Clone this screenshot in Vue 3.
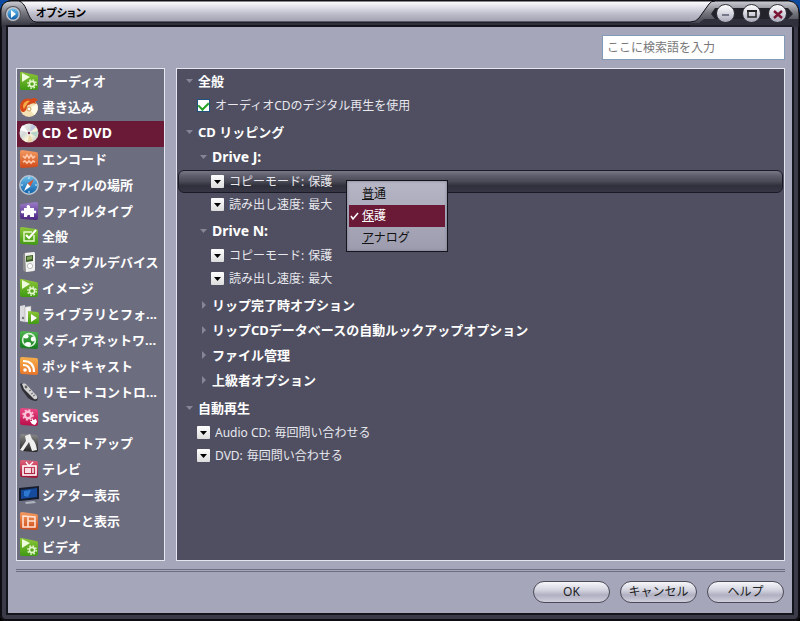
<template>
  <div class="window">
    <!-- Shared icon shapes -->
    <svg class="sprite" width="0" height="0" aria-hidden="true">
      <defs>
        <linearGradient id="gGreen" x1="0" y1="0" x2="0" y2="1">
          <stop offset="0" stop-color="#8fc63a" /><stop offset="1" stop-color="#3f9a12" />
        </linearGradient>
        <linearGradient id="gOrange" x1="0" y1="0" x2="0" y2="1">
          <stop offset="0" stop-color="#f39a62" /><stop offset="1" stop-color="#cf4a18" />
        </linearGradient>
        <linearGradient id="gFeed" x1="0" y1="0" x2="0" y2="1">
          <stop offset="0" stop-color="#f6b04c" /><stop offset="1" stop-color="#e8742a" />
        </linearGradient>
        <linearGradient id="gPurple" x1="0" y1="0" x2="0" y2="1">
          <stop offset="0" stop-color="#9b7cc8" /><stop offset="1" stop-color="#4a2580" />
        </linearGradient>
        <linearGradient id="gRed" x1="0" y1="0" x2="0" y2="1">
          <stop offset="0" stop-color="#e0607a" /><stop offset="1" stop-color="#9c1230" />
        </linearGradient>
        <linearGradient id="gPink" x1="0" y1="0" x2="0" y2="1">
          <stop offset="0" stop-color="#ea4a86" /><stop offset="1" stop-color="#b80c48" />
        </linearGradient>
        <linearGradient id="gDark" x1="0" y1="0" x2="0" y2="1">
          <stop offset="0" stop-color="#8a8a8a" /><stop offset="1" stop-color="#222" />
        </linearGradient>
        <linearGradient id="gNet" x1="0" y1="0" x2="0" y2="1">
          <stop offset="0" stop-color="#4eb450" /><stop offset="1" stop-color="#147a1c" />
        </linearGradient>
        <linearGradient id="gSky" x1="0" y1="0" x2="0" y2="1">
          <stop offset="0" stop-color="#6cc0ec" /><stop offset="1" stop-color="#0c5ea8" />
        </linearGradient>
        <linearGradient id="gDisc" x1="0" y1="0" x2="1" y2="1">
          <stop offset="0" stop-color="#fff" /><stop offset="0.4" stop-color="#d2d8d6" />
          <stop offset="0.6" stop-color="#faf6da" /><stop offset="1" stop-color="#b9bcc4" />
        </linearGradient>
      </defs>
      <symbol id="media" viewBox="0 0 20 20">
        <path d="M1 2 Q1 0 3 1 L17 4 Q19 4 19 6 V17 Q19 19 17 19 H3 Q1 19 1 17Z" fill="url(#gGreen)" />
        <path d="M3 2 L11 6 L3 11Z" fill="#eefbdc" />
        <circle cx="13" cy="13" r="2.6" fill="none" stroke="#e4f6cc" stroke-width="1.6" />
        <circle cx="13" cy="13" r="4.2" fill="none" stroke="#e4f6cc" stroke-width="1.4" stroke-dasharray="1.7 1.6" />
      </symbol>
      <symbol id="burn" viewBox="0 0 20 20">
        <circle cx="10" cy="11" r="9" fill="#f3e3b4" />
        <path d="M10 11 L18 7 A9 9 0 0 1 15 18Z" fill="#fffbe8" />
        <path d="M1 10 C1 3 7 0 12 2 C15 0 18 1 19 4 C16 3 16 5 17 7 C13 5 12 8 9 8 C7 10 9 12 5 15 C2 15 1 13 1 10Z" fill="#d6481a" />
        <path d="M4 10 C4 5 8 3 11 4 C8 6 8 8 5 12Z" fill="#f6ac46" />
        <circle cx="10" cy="12" r="2" fill="#fff" stroke="#c99a58" />
      </symbol>
      <symbol id="disc" viewBox="0 0 20 20">
        <circle cx="10" cy="10" r="9.5" fill="url(#gDisc)" />
        <path d="M10 10 L1 7 A9.5 9.5 0 0 1 4 2Z" fill="#fff" />
        <path d="M10 10 L9 19 A9 9 0 0 0 14 18Z" fill="#e9d5a8" />
        <path d="M10 10 L19 8 L18 14Z" fill="#b7d4c6" />
        <path d="M10 10 L13 1 L17 4Z" fill="#bdc4e0" />
        <circle cx="10" cy="10" r="2.4" fill="#eee" />
        <circle cx="10" cy="10" r="1.2" fill="#6b1a35" />
      </symbol>
      <symbol id="encode" viewBox="0 0 20 20">
        <path d="M1 3 Q1 1 3 1 L17 3 Q19 3 19 5 V16 Q19 18 17 18 L3 19 Q1 19 1 17Z" fill="url(#gOrange)" />
        <path d="M4 7 L6 9 L8 6 L10 9 L12 6 L14 9 L16 7 M4 13 L6 12 L8 14 L10 12 L12 14 L14 12 L16 13" fill="none" stroke="#ffc9ac" stroke-width="1.6" />
      </symbol>
      <symbol id="compass" viewBox="0 0 20 20">
        <circle cx="10" cy="10" r="9.2" fill="url(#gSky)" stroke="#b8c4d0" stroke-width="1.4" />
        <path d="M15 4 L11.5 11.5 L8.5 8.5Z" fill="#d65a3a" />
        <path d="M5 16 L8.5 8.5 L11.5 11.5Z" fill="#fff" />
        <path d="M10 2 V4 M10 16 V18 M2 10 H4 M16 10 H18" stroke="#d8f0ff" />
      </symbol>
      <symbol id="puzzle" viewBox="0 0 20 20">
        <path d="M1 5 Q1 3 3 3 L17 1 Q19 1 19 3 V17 Q19 19 17 19 L3 18 Q1 18 1 16Z" fill="url(#gPurple)" />
        <path d="M5 7 H8 C6 3 12 3 11 7 H15 V10 C18 8 18 14 15 12 V16 H11 C12 13 8 13 8 16 H5 V12 C1 14 1 8 5 10Z" fill="#fff" />
      </symbol>
      <symbol id="check" viewBox="0 0 20 20">
        <path d="M1 3 Q1 1 3 1 L17 3 Q19 3 19 5 V17 Q19 19 17 19 L3 18 Q1 18 1 16Z" fill="url(#gGreen)" />
        <path d="M15 9 V15 H5 V6 H13" fill="none" stroke="#e8fad0" stroke-width="1.4" />
        <path d="M7 9 L10 12 L17 4" fill="none" stroke="#fff" stroke-width="2" />
      </symbol>
      <symbol id="player" viewBox="0 0 20 20">
        <path d="M5 1 L15 0 Q16 0 16 2 V18 Q16 19 15 19 L6 20 L4 18 V3Z" fill="#8d8d8d" />
        <path d="M6 1 L15 0 Q16 0 16 2 V17 Q16 19 15 19 L7 20Z" fill="#f0f0ee" />
        <path d="M7 4 L14 3 V9 L7 10Z" fill="#3c5a2a" />
        <path d="M8 5 L13 4 V7 L8 8Z" fill="#7fa458" />
        <circle cx="11" cy="14" r="2.6" fill="#fff" stroke="#bbb" />
      </symbol>
      <symbol id="library" viewBox="0 0 20 20">
        <path d="M1 2 L6 1 V18 L1 17Z" fill="#dcdce0" />
        <path d="M6 3 L12 2 V18 H6Z" fill="#f2f2f4" stroke="#999" stroke-width="0.5" />
        <circle cx="4" cy="14" r="1.2" fill="#777" />
        <path d="M9 7 L18 8 Q20 8 20 10 V18 Q20 20 18 20 H9Z" fill="url(#gGreen)" />
        <path d="M12 10 L18 14 L12 18Z" fill="#fff" />
      </symbol>
      <symbol id="network" viewBox="0 0 20 20">
        <path d="M1 3 Q1 1 3 1 L17 2 Q19 2 19 4 V17 Q19 19 17 19 L3 18 Q1 18 1 16Z" fill="url(#gNet)" />
        <circle cx="10" cy="10" r="6.4" fill="none" stroke="#d8f4d8" stroke-width="1.6" />
        <ellipse cx="7" cy="6.5" rx="2.6" ry="2" fill="#fff" />
        <ellipse cx="14" cy="9" rx="2.2" ry="2.6" fill="#fff" />
        <ellipse cx="9" cy="14" rx="3" ry="2" fill="#fff" />
      </symbol>
      <symbol id="feed" viewBox="0 0 20 20">
        <path d="M1 3 Q1 1 3 1 L17 2 Q19 2 19 4 V17 Q19 19 17 19 L3 18 Q1 18 1 16Z" fill="url(#gFeed)" />
        <circle cx="6" cy="14" r="1.8" fill="#fff" />
        <path d="M4 9 Q11 9 11 16 M4 5 Q15 5 15 16" fill="none" stroke="#fff" stroke-width="2.2" />
      </symbol>
      <symbol id="remote" viewBox="0 0 20 20">
        <path d="M1 2 Q4 0 8 3 L18 14 Q20 19 16 19 Q13 19 9 16 L3 8Z" fill="#2f2f35" />
        <path d="M3 2 Q6 0 9 4 L18 14 Q19 18 15 17 L5 7Z" fill="#d2d2d4" />
        <circle cx="7" cy="5" r="1.4" fill="#666" />
        <path d="M10 9 L12 8 M12 12 L14 11 M14 14 L16 13" stroke="#666" />
      </symbol>
      <symbol id="services" viewBox="0 0 20 20">
        <path d="M1 3 Q1 1 3 1 L17 2 Q19 2 19 4 V17 Q19 19 17 19 L3 18 Q1 18 1 16Z" fill="url(#gPink)" />
        <circle cx="9" cy="8" r="3.2" fill="none" stroke="#ffc4da" stroke-width="2.4" />
        <circle cx="9" cy="8" r="5" fill="none" stroke="#ffc4da" stroke-width="1.6" stroke-dasharray="2 1.9" />
        <path d="M13 10 L14 13 L17 12 L18 15 L16 18 L13 17 L11 14 H13Z" fill="#fff" />
      </symbol>
      <symbol id="startup" viewBox="0 0 20 20">
        <path d="M1 3 Q1 1 3 1 L17 2 Q19 2 19 4 V17 Q19 19 17 19 L3 18 Q1 18 1 16Z" fill="url(#gDark)" />
        <path d="M6 3 L11 1 L13 6 Q17 9 18 17 L13 18 L10 9 L4 18 L1 17 L7 8Z" fill="#f0f0f0" />
      </symbol>
      <symbol id="tv" viewBox="0 0 20 20">
        <path d="M1 3 Q1 1 3 1 L17 2 Q19 2 19 4 V17 Q19 19 17 19 L3 18 Q1 18 1 16Z" fill="url(#gRed)" />
        <rect x="4" y="7" width="13" height="9" fill="none" stroke="#fff" stroke-width="1.6" />
        <rect x="6" y="9" width="6" height="5" fill="#fbdbe0" />
        <path d="M7 3 L10 7 L14 3 M14 9 V14" fill="none" stroke="#fff" stroke-width="1.4" />
      </symbol>
      <symbol id="theater" viewBox="0 0 20 20">
        <path d="M0 3 L20 1 V14 L0 16Z" fill="#161c2c" />
        <path d="M2 5 L18 3 V12 L2 14Z" fill="#154a9c" />
        <path d="M5 6 L12 5 L9 12 L5 11Z" fill="#2f78d2" />
        <path d="M6 17 L15 16 L17 18 L7 19Z" fill="#aeb4bc" />
      </symbol>
      <symbol id="layout" viewBox="0 0 20 20">
        <path d="M1 3 Q1 1 3 1 L17 3 Q19 3 19 5 V17 Q19 19 17 19 L3 18 Q1 18 1 16Z" fill="url(#gOrange)" />
        <path d="M4 5 L16 6 V16 H4Z M9 5 V16 M9 10 H16" fill="none" stroke="#ffe4d4" stroke-width="1.6" />
      </symbol>
    </svg>

    <header class="titlebar">
      <svg class="cap-left" viewBox="0 0 36 27" width="36" height="27" aria-hidden="true">
        <defs>
          <linearGradient id="frame" x1="0" y1="0" x2="0" y2="1">
            <stop offset="0" stop-color="#cfcfd6" /><stop offset="0.45" stop-color="#77777f" />
            <stop offset="1" stop-color="#30303c" />
          </linearGradient>
          <linearGradient id="silver" gradientUnits="userSpaceOnUse" x1="0" y1="2" x2="0" y2="22">
            <stop offset="0" stop-color="#fbfbfd" /><stop offset="0.3" stop-color="#dcdce6" />
            <stop offset="0.65" stop-color="#b8b8c6" /><stop offset="1" stop-color="#a4a4b4" />
          </linearGradient>
        </defs>
        <path d="M0 0 H10 Q2 2 0 10Z" fill="#0b4aa0" />
        <path d="M1 27 V10 Q2 1 11 1 H36 V27Z" fill="url(#frame)" />
        <path d="M19 1 C26 3 27 14 31 19 Q33 22 36 22 V1Z" fill="url(#silver)" />
        <path d="M30 23 H36 V27 H8 V26 H30Z" fill="#30303c" />
        <path d="M1 27 V10 Q2 1 11 1 H36 M19 1 C26 3 27 14 31 19 Q33 22 36 22 M8 26 H36" fill="none" stroke="#111118" />
        <circle cx="13" cy="14" r="8" fill="#55555f" />
        <circle cx="13" cy="14" r="7" fill="#c2c4cc" />
        <circle cx="13" cy="14" r="5.5" fill="url(#gSky)" />
        <path d="M11 10 L16 14 L11 18Z" fill="#fff" />
      </svg>
      <h1 class="title">オプション</h1>
      <div class="cap-right">
        <svg viewBox="0 0 110 27" width="110" height="27" aria-hidden="true">
          <path d="M98 0 H110 V14 Q109 2 98 0Z" fill="#0b4aa0" />
          <path d="M0 22 Q6 22 9 18 L19 4 Q21 1 25 1 H99 Q109 2 109 14 V27 H0Z" fill="url(#frame)" />
          <path d="M0 1 H25 Q21 1 19 4 L9 18 Q6 22 0 22Z" fill="url(#silver)" />
          <path d="M0 23 H9 L14 19 H109 V27 H0Z" fill="#30303c" />
          <path d="M0 1 H99 Q109 2 109 14 V27 M0 22 Q6 22 9 18 L19 4 Q21 1 25 1 M0 26 H102" fill="none" stroke="#111118" />
          <path d="M21 14 L25 8 H98 L103 14 L98 19 H25Z" fill="#23232c" />
        </svg>
        <div class="controls">
          <button class="control" aria-label="最小化">
            <svg viewBox="0 0 12 12" width="12" height="12"><path d="M2 7 H9" stroke="#77778a" stroke-width="2" /></svg>
          </button>
          <button class="control" aria-label="最大化">
            <svg viewBox="0 0 12 12" width="12" height="12"><path d="M2 3 H10 V9 H2Z" fill="none" stroke="#222" stroke-width="1.5" /><path d="M1 3 H11" stroke="#222" stroke-width="2" /></svg>
          </button>
          <button class="control" aria-label="閉じる">
            <svg viewBox="0 0 12 12" width="12" height="12"><path d="M2 3 L10 10 M10 3 L2 10" stroke="#7a1434" stroke-width="2.4" /></svg>
          </button>
        </div>
      </div>
    </header>

    <main class="content">
      <div class="toolbar">
        <input v-model="search" class="search" type="text" placeholder="ここに検索語を入力" aria-label="検索" />
      </div>

      <div class="panels">
        <nav class="sidebar">
          <button
            v-for="item in categories"
            :key="item.name"
            class="category"
            :class="{ selected: item.name === current, latin: isLatin(item.name) }"
            @click="current = item.name"
          >
            <svg class="category-icon" width="20" height="20" aria-hidden="true"><use :href="'#' + item.icon" /></svg>
            <span class="category-name">{{ item.name }}</span>
          </button>
        </nav>

        <section class="tree">
          <div v-for="group in groups" :key="group.title" class="group" :class="{ sub: group.level === 1 }">
            <button
              class="heading"
              :class="{ latin: isLatin(group.title) }"
              :aria-expanded="group.open"
              @click="group.open = !group.open"
            >
              <svg class="twisty" viewBox="0 0 8 8" width="8" height="8" aria-hidden="true">
                <path v-if="group.open" d="M1 2 H8 L4.5 6Z" />
                <path v-else d="M3 0 L7 4 L3 8Z" />
              </svg>
              {{ group.title }}
            </button>
            <template v-if="group.open">
              <div
                v-for="row in group.rows"
                :key="row.id"
                class="row"
                :class="{ active: row.id === activeRow }"
              >
                <template v-if="row.type === 'check'">
                  <input :id="row.id" v-model="row.value" class="tick" type="checkbox" />
                  <label :for="row.id">{{ row.label }}</label>
                </template>
                <template v-else>
                  <span class="arrow">
                    <svg viewBox="0 0 7 4" width="7" height="4" aria-hidden="true"><path d="M0 0 H7 L3.5 4Z" /></svg>
                  </span>
                  <label :for="row.id">{{ row.label }}:</label>
                  <select :id="row.id" v-model="row.value" class="value" @mousedown.prevent="toggleMenu(row.id)">
                    <option v-for="option in row.options" :key="option">{{ option }}</option>
                  </select>
                </template>
                <div v-if="row.options && row.id === openMenu" class="menu" role="menu">
                  <button
                    v-for="option in row.options"
                    :key="option"
                    class="menu-item"
                    :class="{ chosen: option === row.value }"
                    role="menuitemradio"
                    :aria-checked="option === row.value"
                    @click="choose(row, option)"
                  >
                    <svg class="menu-check" viewBox="0 0 9 9" width="9" height="9" aria-hidden="true">
                      <path v-if="option === row.value" d="M1 4 L3 7 L8 1" />
                    </svg>
                    <span><u>{{ option[0] }}</u>{{ option.slice(1) }}</span>
                  </button>
                </div>
              </div>
            </template>
          </div>
        </section>
      </div>

      <footer class="footer">
        <button v-for="name in ['OK', 'キャンセル', 'ヘルプ']" :key="name" class="push">{{ name }}</button>
      </footer>
    </main>
  </div>
</template>

<script setup>
import { ref } from 'vue';

const search = ref('');
const current = ref('CD と DVD');
const activeRow = ref('copy-j');
const openMenu = ref('copy-j');

const categories = [
  { name: 'オーディオ', icon: 'media' },
  { name: '書き込み', icon: 'burn' },
  { name: 'CD と DVD', icon: 'disc' },
  { name: 'エンコード', icon: 'encode' },
  { name: 'ファイルの場所', icon: 'compass' },
  { name: 'ファイルタイプ', icon: 'puzzle' },
  { name: '全般', icon: 'check' },
  { name: 'ポータブルデバイス', icon: 'player' },
  { name: 'イメージ', icon: 'media' },
  { name: 'ライブラリとフォ...', icon: 'library' },
  { name: 'メディアネットワ...', icon: 'network' },
  { name: 'ポッドキャスト', icon: 'feed' },
  { name: 'リモートコントロ...', icon: 'remote' },
  { name: 'Services', icon: 'services' },
  { name: 'スタートアップ', icon: 'startup' },
  { name: 'テレビ', icon: 'tv' },
  { name: 'シアター表示', icon: 'theater' },
  { name: 'ツリーと表示', icon: 'layout' },
  { name: 'ビデオ', icon: 'media' }
];

const modes = ['普通', '保護', 'アナログ'];

const groups = ref([
  {
    title: '全般', level: 0, open: true,
    rows: [{ id: 'digital', type: 'check', label: 'オーディオCDのデジタル再生を使用', value: true }]
  },
  { title: 'CD リッピング', level: 0, open: true, rows: [] },
  {
    title: 'Drive J:', level: 1, open: true,
    rows: [
      { id: 'copy-j', label: 'コピーモード', value: '保護', options: modes },
      { id: 'speed-j', label: '読み出し速度', value: '最大', options: ['最大'] }
    ]
  },
  {
    title: 'Drive N:', level: 1, open: true,
    rows: [
      { id: 'copy-n', label: 'コピーモード', value: '保護', options: modes },
      { id: 'speed-n', label: '読み出し速度', value: '最大', options: ['最大'] }
    ]
  },
  { title: 'リップ完了時オプション', level: 1, open: false, rows: [] },
  { title: 'リップCDデータベースの自動ルックアップオプション', level: 1, open: false, rows: [] },
  { title: 'ファイル管理', level: 1, open: false, rows: [] },
  { title: '上級者オプション', level: 1, open: false, rows: [] },
  {
    title: '自動再生', level: 0, open: true,
    rows: [
      { id: 'auto-cd', label: 'Audio CD', value: '毎回問い合わせる', options: ['毎回問い合わせる'] },
      { id: 'auto-dvd', label: 'DVD', value: '毎回問い合わせる', options: ['毎回問い合わせる'] }
    ]
  }
]);

// names that end in latin letters are set one size larger
const isLatin = (text) => /[A-Za-z]:?$/.test(text);

const toggleMenu = (id) => {
  activeRow.value = id;
  openMenu.value = openMenu.value === id ? null : id;
};

const choose = (row, option) => {
  row.value = option;
  openMenu.value = null;
};
</script>

<style>
body {
  margin: 0;
  background: #000;
}
</style>

<style scoped>
.window {
  box-sizing: border-box;
  min-height: 100vh;
  display: flex;
  flex-direction: column;
  font-family: "Noto Sans", "Noto Sans CJK JP", sans-serif;
  font-size: 12px;
  line-height: 20px;
  color: #e8e8ee;
  background: #3b3a48;
  border-radius: 10px 10px 6px 6px;
  box-shadow: inset 0 0 0 2px #0c0c12;
}

.window * {
  box-sizing: border-box;
}

button,
input,
select {
  font: inherit;
  color: inherit;
  margin: 0;
}

.sprite {
  position: absolute;
}

/* Title bar */
.titlebar {
  display: flex;
  height: 27px;
}

.titlebar svg {
  display: block;
  flex: none;
}

.title {
  flex: 1;
  margin: 0;
  padding-top: 2px;
  font-size: 11px;
  line-height: 21px;
  font-weight: bold;
  font-feature-settings: "palt";
  color: #000;
  background: linear-gradient(#111118 1px, #fbfbfd 2px, #dcdce6 8px, #b8b8c6 15px, #a4a4b4 21px, #111118 22px, #30303c 23px, #30303c 25px, #111118 26px);
}

.cap-right {
  position: relative;
}

.controls {
  position: absolute;
  inset: 4px 13px auto auto;
  display: flex;
  gap: 7px;
}

.control {
  display: flex;
  align-items: center;
  justify-content: center;
  width: 19px;
  height: 19px;
  padding: 0;
  border: 1px solid #33333d;
  border-radius: 50%;
  background: linear-gradient(#fff, #d6d6e0 50%, #a9a9b9);
}

/* Content */
.content {
  flex: 1;
  display: flex;
  flex-direction: column;
  margin: 0 8px 8px;
  padding: 8px 7px 0 8px;
  background: #a6a6ba;
  box-shadow: 0 0 0 2px #14141c;
}

.toolbar {
  display: flex;
  justify-content: flex-end;
  margin-bottom: 8px;
}

.search {
  width: 183px;
  height: 25px;
  padding: 0 4px;
  border: 1px solid #8299b8;
  background: #fff;
  color: #333;
}

.search::placeholder {
  color: #777;
}

.panels {
  flex: 1;
  display: grid;
  grid-template-columns: 149px 1fr;
  gap: 11px;
}

.sidebar {
  display: grid;
  grid-auto-rows: 1fr;
  border: 1px solid #e6e6f0;
  background: #6d6d80;
}

.category {
  display: flex;
  align-items: center;
  gap: 3px;
  min-width: 0;
  padding: 0 2px 1px;
  border: 0;
  background: none;
  color: #fff;
  font-size: 13px;
  font-weight: bold;
}

.category.selected {
  background: #6a1a36;
}

.category-icon {
  flex: none;
}

.category-name {
  white-space: nowrap;
}

.tree {
  padding: 0 1px 8px;
  border: 1px solid #e6e6f0;
  background: #4f4f61;
}

.heading {
  display: flex;
  align-items: center;
  gap: 5px;
  height: 25px;
  padding: 0 0 2px 7px;
  border: 0;
  background: none;
  color: #fff;
  font-size: 13px;
  font-weight: bold;
}

.sub .heading {
  padding-left: 21px;
}

.category.latin,
.heading.latin {
  font-size: 14px;
}

.twisty {
  fill: #858595;
}

.row {
  position: relative;
  display: flex;
  align-items: center;
  gap: 4px;
  height: 23px;
  padding-left: 19px;
}

.sub .row {
  padding-left: 33px;
}

.row:last-child:not(:first-child) {
  margin-bottom: 3px;
}

.sub:has(+ .group:not(.sub)) {
  margin-bottom: 3px;
}

.row.active {
  border: 1px solid #1b1b28;
  border-radius: 6px;
  padding-left: 32px;
  background: linear-gradient(#777785, #5b5b69 25%, #4a4a57 50%, #30303c 70%, #363645);
}

.tick {
  appearance: none;
  width: 13px;
  height: 13px;
  border: 1px solid #1c5180;
  background: #fff;
}

.tick:checked::before {
  content: "";
  display: block;
  width: 5px;
  height: 8px;
  margin: 0 auto;
  border: solid #21a121;
  border-width: 0 2px 2px 0;
  transform: rotate(45deg);
}

.tick + label {
  padding-left: 1px;
}

.arrow {
  display: flex;
  align-items: center;
  justify-content: center;
  width: 13px;
  height: 13px;
  margin-right: 1px;
  border-radius: 1px;
  background: linear-gradient(#fff, #dcdcdc);
}

.value {
  appearance: none;
  padding: 0;
  border: 0;
  background: none;
}

/* Popup menu */
.menu {
  position: absolute;
  top: 9px;
  left: 167px;
  z-index: 1;
  width: 102px;
  padding: 2px;
  border: 1px solid #14141c;
  background: linear-gradient(#b6b6c6, #9c9cae);
  box-shadow: inset 0 0 3px #77778a;
}

.menu-item {
  display: flex;
  align-items: center;
  gap: 3px;
  width: 100%;
  height: 22px;
  padding: 0 1px;
  border: 0;
  background: none;
  color: #111;
}

.menu-item.chosen {
  background: #6a1a36;
  color: #fff;
}

.menu-check {
  fill: none;
  stroke: #fff;
  stroke-width: 1.5;
}

/* Footer */
.footer {
  display: flex;
  justify-content: flex-end;
  gap: 10px;
  margin-top: 8px;
  padding: 9px 1px 10px;
  border-top: 3px double #6d6d80;
}

.push {
  width: 77px;
  height: 22px;
  padding: 0;
  border: 1px solid #4a4a58;
  border-radius: 11px;
  background: linear-gradient(#f6f6fa, #d4d4e0 40%, #b0b0c2 65%, #cfcfdc);
  color: #222;
  line-height: 18px;
}
</style>
